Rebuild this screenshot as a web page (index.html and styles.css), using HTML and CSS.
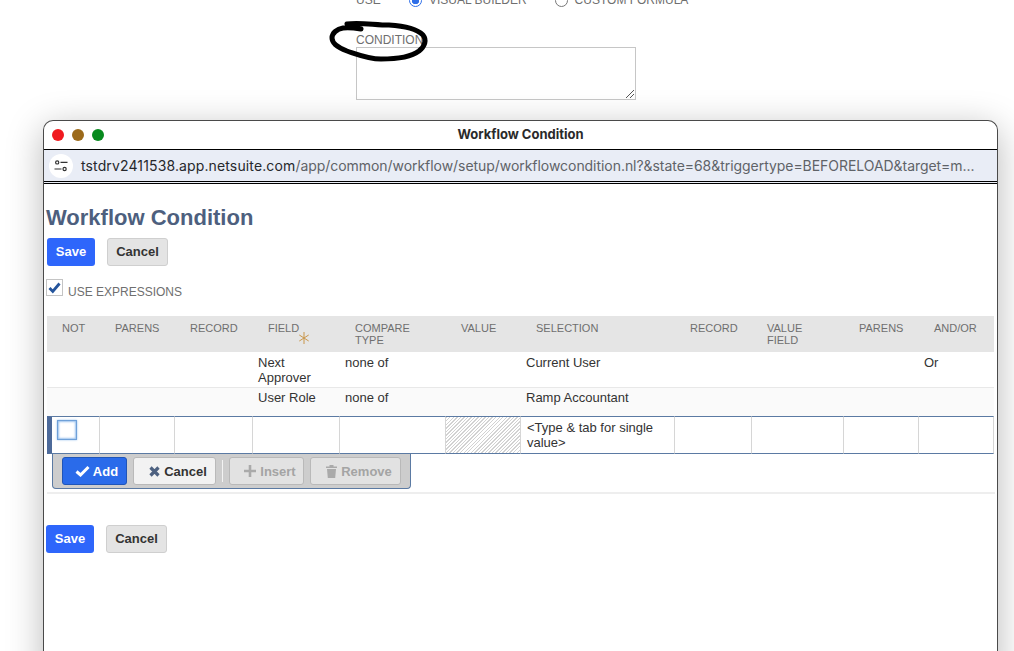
FILE: index.html
```html
<!DOCTYPE html>
<html lang="en">
<head>
<meta charset="utf-8">
<title>Workflow Condition</title>
<link rel="stylesheet" href="styles.css">
</head>
<body>
<section class="backdrop">
  <div class="use-row">
    <span class="use-label">USE</span>
    <span class="radio radio-on"></span><span class="radio-text">VISUAL BUILDER</span>
    <span class="radio radio-off"></span><span class="radio-text">CUSTOM FORMULA</span>
  </div>
  <label class="cond-label">CONDITION</label>
  <div class="cond-box">
    <svg class="grip" width="9" height="9" viewBox="0 0 9 9"><path d="M1 9 9 1M5 9 9 5" stroke="#555" stroke-width="1" fill="none"/></svg>
  </div>
  <svg class="scribble" width="110" height="50" viewBox="0 0 110 50">
    <path d="M20 4C32 2 48 5 62 5C78 6 90 9 96 15C100 20 98 26 92 31C84 37 70 39 54 39C42 39 32 35 20 31C12 28 5 24 5 18C5 13 10 9 16 8C22 7 28 8 34 9" fill="none" stroke="#000" stroke-width="5" stroke-linecap="round" stroke-linejoin="round"/>
  </svg>
</section>

<main class="window">
  <header class="titlebar">
    <span class="light light-red"></span>
    <span class="light light-brown"></span>
    <span class="light light-green"></span>
    <span class="title">Workflow Condition</span>
  </header>
  <div class="urlbar">
    <span class="site-icon">
      <svg width="14" height="12" viewBox="0 0 14 12"><g fill="none" stroke="#333" stroke-width="1.2"><circle cx="3.2" cy="2.4" r="1.6"/><path d="M6.5 2.4H13.5M0.5 9H7.5"/><circle cx="10.6" cy="9" r="1.6"/></g></svg>
    </span>
    <span class="url"><span class="host">tstdrv2411538.app.netsuite.com</span>/app/common/workflow/setup/workflowcondition.nl?&amp;state=68&amp;triggertype=BEFORELOAD&amp;target=m...</span>
  </div>

  <div class="content">
    <h1 class="heading">Workflow Condition</h1>
    <div class="actions actions-top">
      <button class="btn btn-save">Save</button>
      <button class="btn btn-cancel">Cancel</button>
    </div>
    <div class="expr">
      <span class="check">
        <svg width="13" height="12" viewBox="0 0 13 12"><path d="M1.5 6 4.8 9.5 11.5 1.5" fill="none" stroke="#24549c" stroke-width="2.8"/></svg>
      </span>
      <span class="expr-label">USE EXPRESSIONS</span>
    </div>

    <table class="grid">
      <colgroup>
        <col class="c1"><col class="c2"><col class="c3"><col class="c4"><col class="c5"><col class="c6">
        <col class="c7"><col class="c8"><col class="c9"><col class="c10"><col class="c11">
      </colgroup>
      <thead>
        <tr>
          <th>NOT</th><th>PARENS</th><th>RECORD</th>
          <th>FIELD<svg class="req" width="10" height="12" viewBox="0 0 10 12"><path d="M5 0V12M0.3 3 9.7 9M9.7 3 0.3 9" fill="none" stroke="#c9964a" stroke-width="1"/></svg></th>
          <th>COMPARE TYPE</th><th>VALUE</th><th>SELECTION</th><th>RECORD</th>
          <th>VALUE FIELD</th><th>PARENS</th><th>AND/OR</th>
        </tr>
      </thead>
      <tbody>
        <tr class="row-a">
          <td></td><td></td><td></td><td>Next Approver</td><td>none of</td><td></td><td>Current User</td><td></td><td></td><td></td><td>Or</td>
        </tr>
        <tr class="row-b">
          <td></td><td></td><td></td><td>User Role</td><td>none of</td><td></td><td>Ramp Accountant</td><td></td><td></td><td></td><td></td>
        </tr>
        <tr class="row-edit">
          <td class="cell-first"><span class="edit-check"></span></td><td></td><td></td><td></td><td></td>
          <td class="cell-hatch"></td><td class="cell-select">&lt;Type &amp; tab for single value&gt;</td>
          <td></td><td></td><td></td><td></td>
        </tr>
      </tbody>
    </table>

    <div class="toolbar">
      <button class="tool tool-add">
        <svg width="15" height="12" viewBox="0 0 15 12"><path d="M1.5 6.5 5.5 10 13.5 2" fill="none" stroke="#fff" stroke-width="3"/></svg>Add
      </button>
      <button class="tool tool-cancel">
        <svg width="11" height="11" viewBox="0 0 11 11"><path d="M1.5 1.5 9.5 9.5M9.5 1.5 1.5 9.5" fill="none" stroke="#4d6180" stroke-width="3.2"/></svg>Cancel
      </button>
      <span class="tool-sep"></span>
      <button class="tool tool-off tool-insert">
        <svg width="12" height="12" viewBox="0 0 12 12"><path d="M6 0V12M0 6H12" fill="none" stroke="#aaa" stroke-width="2.6"/></svg>Insert
      </button>
      <button class="tool tool-off tool-remove">
        <svg width="11" height="13" viewBox="0 0 11 13"><path d="M0 1.5H11V3H0ZM3.5 0H7.5V1.5H3.5ZM1 4H10L9.2 13H1.8Z" fill="#aaa"/></svg>Remove
      </button>
    </div>
    <div class="rule"></div>

    <div class="actions actions-bottom">
      <button class="btn btn-save">Save</button>
      <button class="btn btn-cancel">Cancel</button>
    </div>
  </div>
</main>
</body>
</html>
```

FILE: styles.css
```css
* { box-sizing: border-box; }
html, body { margin: 0; padding: 0; width: 1014px; height: 651px; overflow: hidden; background: #fff; }
body { font-family: "Liberation Sans", Arial, sans-serif; font-size: 13px; color: #333; }

.backdrop { position: relative; display: flow-root; height: 120px; padding-left: 356px; color: #6f6f6f; font-size: 12px; }
.use-row { display: flex; align-items: center; height: 14px; margin-top: -7px; }
.use-label { width: 53px; }
.radio { width: 13px; height: 13px; border-radius: 50%; flex: none; margin-right: 7px; }
.radio-on { border: 1px solid #2f6fe8; background: radial-gradient(circle, #2f6fe8 0 3.5px, #fff 4px); }
.radio-off { border: 1px solid #777; background: #fff; }
.radio-on + .radio-text { margin-right: 28px; }
.cond-label { display: block; margin-top: 27px; height: 13px; line-height: 13px; }
.cond-box { position: relative; width: 280px; height: 53px; border: 1px solid #c6c6c6; background: #fff; }
.grip { position: absolute; right: 1px; bottom: 1px; }
.scribble { position: absolute; left: 327px; top: 20px; }

.window {
  width: 955px; height: 560px; margin-left: 43px; background: #fff;
  border: 1px solid #4a4a4a; border-bottom: 0; border-radius: 10px 10px 0 0;
  box-shadow: 0 8px 36px rgba(0, 0, 0, .28); position: relative;
}
.titlebar { display: flex; align-items: center; gap: 8px; height: 28px; padding: 0 0 0 8px; position: relative; }
.light { width: 12px; height: 12px; border-radius: 50%; flex: none; }
.light-red { background: #f01a1f; }
.light-brown { background: #9c6a1a; }
.light-green { background: #078a1e; }
.title { position: absolute; left: 0; right: 0; top: 5px; text-align: center; font: 700 13px/16px Inter, "Liberation Sans", sans-serif; color: #2a2a2a; }

.urlbar {
  display: flex; align-items: center; height: 35px; background: #e9edf6;
  border-top: 1px solid #000; border-bottom: 3px double #000; padding-left: 5px;
}
.site-icon { width: 24px; height: 24px; background: #fff; border-radius: 50%; display: flex; align-items: center; justify-content: center; flex: none; }
.url { margin-left: 8px; font: 14px/18px Inter, "Liberation Sans", sans-serif; color: #5f6368; white-space: nowrap; letter-spacing: -.05px; }
.host { color: #26282c; letter-spacing: .13px; }

.content { padding: 0 2px; }
.heading { margin: 0; padding-top: 21px; font-size: 22px; line-height: 26px; font-weight: 700; color: #4d5f7e; height: 54px; }
.actions { display: flex; gap: 12px; }
.actions-top { margin: 0 0 0 1px; }
.btn { height: 28px; padding: 0 0 2px; border-radius: 3px; font: 700 13px/1 "Liberation Sans", Arial, sans-serif; }
.btn-save { width: 48px; border: 0; background: #2e66fb; color: #fff; }
.btn-cancel { width: 61px; border: 1px solid #cfcfcf; background: #e4e4e4; color: #333; }

.expr { display: flex; align-items: flex-start; height: 50px; padding-top: 13px; }
.check { width: 17px; height: 17px; border: 1px solid #c4c4c4; background: #fff; display: flex; align-items: center; justify-content: center; }
.expr-label { margin: 6px 0 0 5px; font-size: 12px; line-height: 14px; color: #6f6f6f; }

.grid { width: 947px; margin-left: 1px; border-collapse: separate; border-spacing: 0; table-layout: fixed; }
.c1 { width: 53px; } .c2 { width: 75px; } .c3 { width: 78px; } .c4 { width: 87px; }
.c5 { width: 106px; } .c6 { width: 75px; } .c7 { width: 154px; } .c8 { width: 77px; }
.c9 { width: 92px; } .c10 { width: 75px; } .c11 { width: 75px; }

.grid th {
  height: 36px; padding: 6px 8px 0 15px; background: #e5e5e5; color: #6f6f6f;
  font-size: 11px; line-height: 12px; font-weight: 400; text-align: left; vertical-align: top; position: relative;
}
.req { position: absolute; left: 46px; top: 16px; }
.grid td { padding: 3px 6px 0 5px; font-size: 13px; line-height: 15px; color: #333; vertical-align: top; }
.row-a td { height: 36px; border-bottom: 1px solid #e8e8e8; }
.row-b td { height: 28px; background: #fafafa; padding-top: 2px; }
.row-edit td {
  height: 38px; padding: 3px 6px 0; border-top: 1px solid #5b7aa3; border-bottom: 1px solid #5b7aa3;
  border-right: 1px solid #d6d6d6; background: #fff;
}
.row-edit .cell-first { border-left: 5px solid #4d6a9a; padding: 3px 0 0 5px; }
.edit-check { display: block; width: 20px; height: 20px; border: 1px solid #6fa0d8; box-shadow: 0 0 2px 1px #9dc3ee inset, 0 0 2px #9dc3ee; background: #fff; }
.row-edit .cell-hatch { background: repeating-linear-gradient(135deg, #d2d2d2 0 1px, #fff 1px 2.5px); }
.row-edit .cell-select { padding-left: 6px; }

.toolbar {
  display: flex; align-items: flex-start; width: 359px; height: 35px; margin: 0 0 0 6px; padding: 3px 0 0 9px;
  background: #cdcdcd; border: 1px solid #5b7aa3; border-top: 0; border-radius: 0 0 4px 4px;
}
.tool {
  display: flex; align-items: center; justify-content: center; gap: 5px; height: 28px; padding: 0 0 0 7px; border-radius: 3px;
  font: 700 13px/1 "Liberation Sans", Arial, sans-serif;
}
.tool-add { width: 65px; background: #2a6bea; color: #fff; border: 1px solid #1f55b8; margin-right: 6px; padding-left: 4px; gap: 3px; }
.tool-cancel { width: 83px; background: #f2f2f2; color: #333; border: 1px solid #b9b9b9; gap: 4px; }
.tool-sep { width: 1px; height: 22px; margin: 3px 6px 0; background: #f3f3f3; }
.tool-off { background: #e2e2e2; color: #a4a4a4; border: 1px solid #b9b9b9; }
.tool-insert { width: 75px; margin-right: 6px; gap: 4px; }
.tool-remove { width: 91px; gap: 4px; }
.rule { height: 2px; margin: 3px 0 0 1px; background: #eeeeee; }
.actions-bottom { margin-top: 31px; }
```
